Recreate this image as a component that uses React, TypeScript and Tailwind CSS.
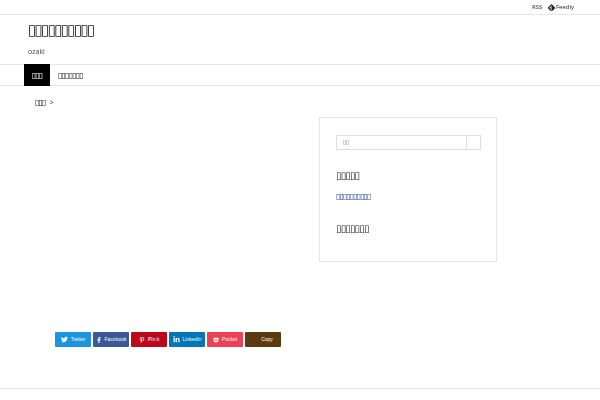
import { FaFacebookF, FaGetPocket, FaLinkedinIn, FaPinterestP, FaTwitter } from 'react-icons/fa';
import { SiFeedly } from 'react-icons/si';
import type { ReactNode } from 'react';

const shareButtons: { label: string; icon: ReactNode; className: string }[] = [
  { label: 'Twitter', icon: <FaTwitter className="text-[7px]" />, className: 'bg-[#1b95e0]' },
  { label: 'Facebook', icon: <FaFacebookF className="text-[6px]" />, className: 'bg-[#3b5998]' },
  { label: 'Pin it', icon: <FaPinterestP className="text-[6px]" />, className: 'bg-[#bd081c]' },
  { label: 'LinkedIn', icon: <FaLinkedinIn className="text-[7px]" />, className: 'bg-[#0077b5]' },
  { label: 'Pocket', icon: <FaGetPocket className="text-[6px]" />, className: 'bg-[#ef4056]' },
  { label: 'Copy', icon: null, className: 'bg-[#5c3a0f] pl-[8px]' },
];

const App = () => {
  return (
    <div className="h-[400px] w-[600px] overflow-hidden bg-white font-['Open_Sans','DejaVu_Sans',sans-serif] text-[#222]">
      {/* Top links */}
      <div className="flex h-[15px] items-center justify-end gap-[6px] border-b border-[#e5e5e5] pr-[26px] text-[6px]">
        <span className="will-change-transform">RSS</span>
        <span className="flex items-center gap-[1px] will-change-transform">
          <SiFeedly className="text-[7px]" />
          Feedly
        </span>
      </div>

      {/* Site title */}
      <header className="h-[49px] pl-[28px] pt-[4px] will-change-transform">
        <h1 className="text-[15px] leading-[20px] font-normal tracking-[-1.7px]">▯▯▯▯▯▯▯▯▯▯</h1>
        <p className="mt-[8px] text-[7px] leading-[10px] text-[#444]">ozaki</p>
      </header>

      {/* Global nav */}
      <nav className="flex h-[22px] border-y border-[#e5e5e5] pl-6 text-[8px] tracking-[-0.85px] will-change-transform">
        <div className="-my-px flex w-[26px] items-center justify-center bg-black text-white">▯▯▯</div>
        <div className="flex items-center pl-[8px]">▯▯▯▯▯▯▯</div>
      </nav>

      <main className="flex">
        <div className="w-[319px]">
          <p className="h-[21px] pl-[35px] pt-[11px] text-[8px] leading-[10px] will-change-transform">
            <span className="tracking-[-0.85px]">▯▯▯</span>
            <span className="ml-[4px] text-[7px]">&gt;</span>
          </p>
          <div className="mt-[225px] flex gap-[2px] pl-[55px]">
            {shareButtons.map((button) => (
              <div
                key={button.label}
                className={`flex h-[15px] w-9 items-center justify-center gap-[3px] rounded-[1px] font-['Liberation_Sans',sans-serif] text-[5px] text-white ${button.className}`}
              >
                {button.icon}
                <span>{button.label}</span>
              </div>
            ))}
          </div>
        </div>

        {/* Sidebar */}
        <aside className="mt-[31px] h-[145px] w-[178px] border border-[#e5e5e5] px-[16px] pt-[17px] will-change-transform">
          <div className="flex h-[15px] w-[145px] border border-[#ddd]">
            <div className="flex-1 pl-[6px] text-[6px] leading-[13px] tracking-[-0.6px] text-[#777]">▯▯</div>
            <div className="w-[14px] border-l border-[#ddd]" />
          </div>
          <h2 className="mt-[19px] text-[10px] leading-[12px] tracking-[-0.85px]">▯▯▯▯▯</h2>
          <a className="mt-[10px] block text-[8px] leading-[10px] tracking-[-0.95px] text-[#2b4a93]">▯▯▯▯▯▯▯▯▯▯</a>
          <h2 className="mt-[21px] text-[10px] leading-[12px] tracking-[-0.85px]">▯▯▯▯▯▯▯</h2>
        </aside>
      </main>

      <footer className="mt-[41px] border-t border-[#e5e5e5]" />
    </div>
  );
};

export default App;
